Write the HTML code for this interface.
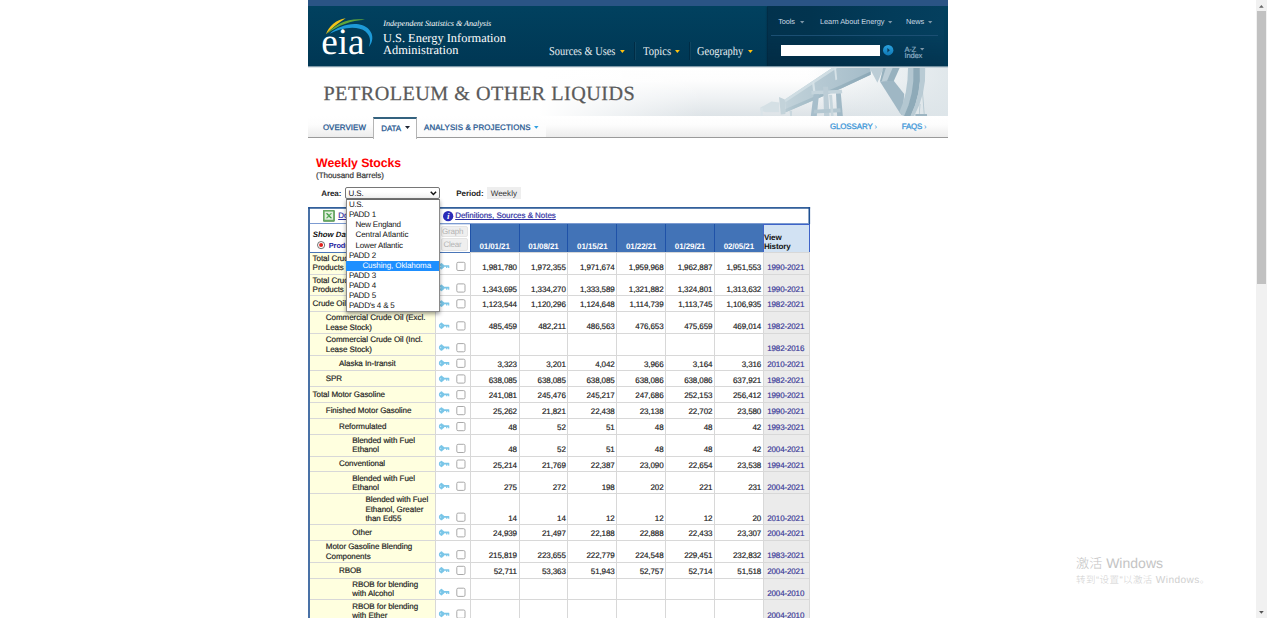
<!DOCTYPE html>
<html lang="en"><head><meta charset="utf-8"><title>Weekly Stocks - U.S. Energy Information Administration</title>
<style>
html,body{margin:0;padding:0;background:#fff;}
body{width:1267px;height:618px;overflow:hidden;position:relative;font-family:"Liberation Sans",sans-serif;}
.t{position:absolute;white-space:nowrap;margin:0;padding:0;text-rendering:geometricPrecision;}
.b{position:absolute;margin:0;padding:0;}
svg{position:absolute;overflow:visible}
</style></head><body>
<div class="b" style="left:308.00px;top:0.00px;width:640.00px;height:6.20px;background:#2a5485;"></div>
<div class="b" style="left:308.00px;top:6.20px;width:640.00px;height:60.10px;background:linear-gradient(#01415f,#003754);"></div>
<div class="b" style="left:767.00px;top:6.20px;width:176.50px;height:60.10px;background:linear-gradient(180deg,rgba(0,25,45,0) 45%,rgba(0,25,45,.28) 100%),linear-gradient(90deg,#02324d 0,#02344f 25%,#033c5a 70%,#043f5e 100%);"></div>
<div class="b" style="left:765.00px;top:6.60px;width:3.00px;height:59.70px;background:linear-gradient(90deg,rgba(0,30,50,0),rgba(0,30,50,.35));"></div>
<svg style="left:318px;top:14px" width="60" height="46" viewBox="0 0 60 46">
<path d="M7.9 20.3 C11 12 18 6 27.7 4.3 C21 8.5 13 15 7.9 20.3Z" fill="#f2c41a"/>
<path d="M9.1 19.8 C17 10 31 3.5 47 5.8 C33 6.5 20 11.5 9.1 19.8Z" fill="#5fa53c"/>
<path d="M11.7 19.8 C22 10 42 6 51 15.5 C56 21 55 28 50.8 33 C53 27 52.5 22 47.5 17.5 C40 11.5 24 13 11.7 19.8Z" fill="#1d9ad8"/>
</svg>
<div class="t " style="left:321.30px;top:18.70px;font:normal normal 37.30px/48.49px 'Liberation Serif',serif;color:#fff;letter-spacing:-0.091px;">eia</div>
<div class="t " style="left:383.30px;top:19.30px;font:italic normal 8.10px/10.53px 'Liberation Serif',serif;color:#fff;letter-spacing:-0.029px;">Independent Statistics &amp; Analysis</div>
<div class="t " style="left:383.00px;top:29.70px;font:normal normal 12.40px/16.12px 'Liberation Serif',serif;color:#fff;letter-spacing:-0.003px;">U.S. Energy Information</div>
<div class="t " style="left:383.00px;top:41.70px;font:normal normal 12.40px/16.12px 'Liberation Serif',serif;color:#fff;letter-spacing:0.030px;">Administration</div>
<div class="t " style="left:548.60px;top:43.90px;font:normal normal 12.00px/15.60px 'Liberation Serif',serif;color:#e8eef2;transform:scaleX(0.8662);transform-origin:0 0;">Sources &amp; Uses</div>
<div class="t " style="left:642.80px;top:43.90px;font:normal normal 12.00px/15.60px 'Liberation Serif',serif;color:#e8eef2;transform:scaleX(0.8830);transform-origin:0 0;">Topics</div>
<div class="t " style="left:696.60px;top:43.90px;font:normal normal 12.00px/15.60px 'Liberation Serif',serif;color:#e8eef2;transform:scaleX(0.8666);transform-origin:0 0;">Geography</div>
<svg style="left:619.80px;top:50.20px" width="4.80" height="2.90" viewBox="0 0 10 6"><path d="M0 0H10L5 6Z" fill="#ffc20e"/></svg>
<svg style="left:675.00px;top:50.20px" width="4.80" height="2.90" viewBox="0 0 10 6"><path d="M0 0H10L5 6Z" fill="#ffc20e"/></svg>
<svg style="left:747.70px;top:50.20px" width="4.80" height="2.90" viewBox="0 0 10 6"><path d="M0 0H10L5 6Z" fill="#ffc20e"/></svg>
<div class="b" style="left:634.30px;top:41.50px;width:1.00px;height:18.00px;background:#002c45;"></div>
<div class="b" style="left:635.30px;top:41.50px;width:1.00px;height:18.00px;background:rgba(255,255,255,.06);"></div>
<div class="b" style="left:689.30px;top:41.50px;width:1.00px;height:18.00px;background:#002c45;"></div>
<div class="b" style="left:690.30px;top:41.50px;width:1.00px;height:18.00px;background:rgba(255,255,255,.06);"></div>
<div class="t " style="left:778.20px;top:17.00px;font:normal normal 7.40px/9.62px 'Liberation Sans',sans-serif;color:#c8d8e3;letter-spacing:-0.095px;">Tools</div>
<div class="t " style="left:820.00px;top:17.00px;font:normal normal 7.40px/9.62px 'Liberation Sans',sans-serif;color:#c8d8e3;letter-spacing:-0.056px;">Learn About Energy</div>
<div class="t " style="left:906.00px;top:17.00px;font:normal normal 7.40px/9.62px 'Liberation Sans',sans-serif;color:#c8d8e3;letter-spacing:-0.076px;">News</div>
<svg style="left:800.20px;top:20.60px" width="4.40" height="2.60" viewBox="0 0 10 6"><path d="M0 0H10L5 6Z" fill="#7f97a8"/></svg>
<svg style="left:888.30px;top:20.60px" width="4.40" height="2.60" viewBox="0 0 10 6"><path d="M0 0H10L5 6Z" fill="#7f97a8"/></svg>
<svg style="left:927.50px;top:20.60px" width="4.40" height="2.60" viewBox="0 0 10 6"><path d="M0 0H10L5 6Z" fill="#7f97a8"/></svg>
<div class="b" style="left:771.40px;top:35.20px;width:167.00px;height:1.00px;background:#1b4f73;"></div>
<div class="b" style="left:781.30px;top:44.50px;width:99.00px;height:11.90px;background:#fff;"></div>
<svg style="left:882.8px;top:45.3px" width="10.4" height="10.4" viewBox="0 0 20 20"><defs><linearGradient id="sb" x1="0" y1="0" x2="0" y2="1"><stop offset="0" stop-color="#2ba3e0"/><stop offset="1" stop-color="#0f78b4"/></linearGradient></defs><circle cx="10" cy="10" r="10" fill="url(#sb)"/><path d="M8.4 5.6L13.2 10L8.4 14.4Z" fill="#0a3a58"/></svg>
<div class="t " style="left:904.40px;top:44.60px;font:normal normal 7.60px/9.88px 'Liberation Sans',sans-serif;color:#8badc4;letter-spacing:-0.214px;-webkit-text-stroke:0.18px;">A-Z</div>
<div class="t " style="left:904.60px;top:51.00px;font:normal normal 7.60px/9.88px 'Liberation Sans',sans-serif;color:#8badc4;letter-spacing:-0.198px;-webkit-text-stroke:0.18px;">Index</div>
<svg style="left:919.50px;top:47.60px" width="4.40" height="2.60" viewBox="0 0 10 6"><path d="M0 0H10L5 6Z" fill="#7f97a8"/></svg>
<div class="b" style="left:308px;top:66.3px;width:640px;height:49.9px;background:linear-gradient(90deg,#fff 0,#fff 36%,rgba(255,255,255,0) 62%),linear-gradient(90deg,rgba(221,229,233,0) 78%,rgba(221,229,233,.9) 100%),linear-gradient(180deg,#fff 0,#fdfdfd 30%,#eef1f3 65%,#dde3e7 100%);"></div>
<svg style="left:0;top:0" width="1267" height="130" viewBox="0 0 1267 130"><defs><clipPath id="bc"><rect x="308" y="67.4" width="640" height="48.8"/></clipPath><linearGradient id="bg1" gradientUnits="userSpaceOnUse" x1="760" y1="0" x2="875" y2="0"><stop offset="0" stop-color="#dce6ea"/><stop offset=".25" stop-color="#c0d1d9"/><stop offset="1" stop-color="#a3bbc8"/></linearGradient><linearGradient id="bg2" gradientUnits="userSpaceOnUse" x1="760" y1="0" x2="875" y2="0"><stop offset="0" stop-color="#d9e3e8"/><stop offset=".3" stop-color="#adc3cd"/><stop offset="1" stop-color="#8aa7b6"/></linearGradient></defs><g clip-path="url(#bc)"><path d="M760.3 107.6 L771.5 101.5 L779.2 102.5 L779.2 112.2 L765.4 112.2 L760.8 110.7Z" fill="#d5e0e5"/><path d="M760.3 108.1 L762.8 108.1 L762.8 116.8 L760.8 116.8Z" fill="#d9e3e8"/><path d="M779.0 97.0 L784.9 99.4 L785.4 114.1 L780.8 114.5Z" fill="#c3d3da"/><path d="M789.5 110.7 L792.1 110.7 L791.9 116.8 L790.2 116.8Z" fill="#c9d7de"/><path d="M784.9 99.4 L832.1 67.9 L870.6 67.9 L870.6 74.8 L842.3 88.1 L785.4 112.2Z" fill="url(#bg1)"/><path d="M785.4 109.1 L842.3 84.5 L870.6 71.4 L870.6 74.8 L842.3 88.1 L785.4 112.4Z" fill="url(#bg2)"/><path d="M784.9 99.4 L832.1 67.9 L837.2 67.9 L785.4 102.2Z" fill="#cfdde3"/><path d="M812.1 82.5 L814.1 81.2 L815.7 93.8 L813.6 94.8Z" fill="#d6e2e7"/><path d="M834.1 68.1 L836.0 68.1 L837.2 79.4 L835.4 80.2Z" fill="#d6e2e7"/><path d="M811.4 90.9 L841.8 89.7 L842.3 93.2 L811.6 94.6Z" fill="#c4d4dc"/><path d="M813.6 94.3 L819.0 94.0 L816.7 116.8 L810.7 116.8Z" fill="#a7becb"/><path d="M823.1 86.8 L828.0 86.8 L829.5 116.8 L824.1 116.8Z" fill="#bccdd6"/><path d="M836.0 93.6 L840.8 93.2 L842.9 116.8 L837.2 116.8Z" fill="#a1b9c6"/><path d="M814.1 109.7 L840.3 108.3 L840.7 112.2 L813.6 113.5Z" fill="#b3c7d1"/><path d="M829.0 94.8 L832.1 94.8 L833.6 116.8 L831.1 116.8Z" fill="#c6d5dc"/><path d="M869.5 68.1 L883.7 68.1 L877.4 82.8Z" fill="#bccdd6"/><path d="M883.1 68.1 L899.6 68.1 L893.7 81.2 L879.9 81.4Z" fill="#97b1be"/><path d="M879.9 81.4 L893.7 80.8 L904.2 94.1 L902.4 115.8 L899.4 112.2Z" fill="#9fb7c4"/><path d="M885.8 68.1 L892.6 68.1 L887.1 80.8 L881.7 81.2Z" fill="#bdced7"/><path d="M908.0 68.1 Q908.0 93.9 899.4 112.0 L904.3 116.5 Q915.2 93.9 914.8 68.1 Z" fill="#b3c7d1"/><path d="M913.4 68.1 Q914.8 93.9 903.9 116.5 L910.7 116.5 Q921.6 93.9 920.2 68.1 Z" fill="#8eaab8"/><path d="M919.7 68.1 Q921.6 93.9 910.2 116.5 L913.9 116.5 Q926.5 93.9 925.2 68.1 Z" fill="#b9cbd4"/><path d="M922.0 91.2 L922.9 91.2 L924.7 114.7 L923.8 114.7Z" fill="#b6c8d1"/><path d="M919.7 103.9 L920.5 103.9 L919.6 114.7 L918.8 114.7Z" fill="#b6c8d1"/><path d="M915.4 114.1 L927.0 114.1 L927.0 116.7 L915.4 116.7Z" fill="#9db5c2"/></g></svg>
<div class="b" style="left:308.00px;top:66.00px;width:640.00px;height:1.00px;background:rgba(0,52,82,.5);"></div>
<div class="b" style="left:308.00px;top:67.00px;width:640.00px;height:1.00px;background:rgba(0,52,82,.12);"></div>
<div class="t " style="left:323.40px;top:80.80px;font:normal normal 20.20px/26.26px 'Liberation Serif',serif;color:#5a5a5a;letter-spacing:0.473px;-webkit-text-stroke:0.25px;">PETROLEUM &amp; OTHER LIQUIDS</div>
<div class="b" style="left:308.00px;top:116.00px;width:640.00px;height:21.30px;background:linear-gradient(#fff 0,#fdfdfd 40%,#ececec 100%);"></div>
<div class="b" style="left:308.00px;top:137.00px;width:640.00px;height:1.00px;background:#9a9a9a;"></div>
<div class="b" style="left:417.00px;top:116.00px;width:129.00px;height:21.00px;background:linear-gradient(#fff,#fafafa);"></div>
<div class="b" style="left:373.40px;top:116.60px;width:43.60px;height:22.00px;background:#fff;border:1px solid #b5b5b5;border-top:2px solid #34627f;border-bottom:none;box-sizing:border-box;"></div>
<div class="t " style="left:322.90px;top:122.50px;font:normal normal 7.90px/10.27px 'Liberation Sans',sans-serif;color:#2a5a92;letter-spacing:0.083px;-webkit-text-stroke:0.28px;">OVERVIEW</div>
<div class="t " style="left:381.30px;top:123.60px;font:normal normal 7.90px/10.27px 'Liberation Sans',sans-serif;color:#2a5a92;letter-spacing:-0.049px;-webkit-text-stroke:0.28px;">DATA</div>
<svg style="left:404.90px;top:126.40px" width="5.00" height="3.00" viewBox="0 0 10 6"><path d="M0 0H10L5 6Z" fill="#1d2433"/></svg>
<div class="t " style="left:424.00px;top:122.50px;font:normal normal 7.90px/10.27px 'Liberation Sans',sans-serif;color:#2a5a92;letter-spacing:0.132px;-webkit-text-stroke:0.28px;">ANALYSIS &amp; PROJECTIONS</div>
<svg style="left:534.20px;top:125.60px" width="4.60" height="2.70" viewBox="0 0 10 6"><path d="M0 0H10L5 6Z" fill="#2f9fe0"/></svg>
<div class="t " style="left:829.90px;top:121.80px;font:normal normal 7.90px/10.27px 'Liberation Sans',sans-serif;color:#3a96d8;letter-spacing:-0.065px;-webkit-text-stroke:0.28px;">GLOSSARY</div>
<div class="t " style="left:874.50px;top:121.80px;font:normal normal 7.40px/9.62px 'Liberation Sans',sans-serif;color:#3a96d8;">›</div>
<div class="t " style="left:901.70px;top:121.80px;font:normal normal 7.90px/10.27px 'Liberation Sans',sans-serif;color:#3a96d8;letter-spacing:-0.193px;-webkit-text-stroke:0.28px;">FAQS</div>
<div class="t " style="left:924.00px;top:121.80px;font:normal normal 7.40px/9.62px 'Liberation Sans',sans-serif;color:#3a96d8;">›</div>
<div class="t " style="left:316.10px;top:155.40px;font:normal bold 12.35px/16.05px 'Liberation Sans',sans-serif;color:#f00;letter-spacing:-0.090px;">Weekly Stocks</div>
<div class="t " style="left:316.00px;top:170.60px;font:normal normal 8.00px/10.40px 'Liberation Sans',sans-serif;color:#333;letter-spacing:-0.032px;-webkit-text-stroke:0.18px;">(Thousand Barrels)</div>
<div class="t " style="left:321.20px;top:188.60px;font:normal bold 8.00px/10.40px 'Liberation Sans',sans-serif;color:#222;letter-spacing:-0.051px;">Area:</div>
<div class="b" style="left:345.40px;top:187.00px;width:94.40px;height:12.00px;background:linear-gradient(#fff 40%,#f1f1f1);border:1px solid #767676;border-radius:2px;box-sizing:border-box;"></div>
<div class="t " style="left:348.60px;top:189.00px;font:normal normal 8.00px/10.40px 'Liberation Sans',sans-serif;color:#111;letter-spacing:-0.140px;">U.S.</div>
<svg style="left:430.2px;top:191.3px" width="6.8" height="4.4" viewBox="0 0 14 9"><path d="M1.5 1.5L7 7L12.5 1.5" fill="none" stroke="#111" stroke-width="3.1"/></svg>
<div class="t " style="left:456.30px;top:188.60px;font:normal bold 8.00px/10.40px 'Liberation Sans',sans-serif;color:#222;letter-spacing:-0.051px;">Period:</div>
<div class="b" style="left:486.50px;top:186.60px;width:34.00px;height:12.00px;background:#eee;"></div>
<div class="t " style="left:490.70px;top:188.60px;font:normal normal 8.00px/10.40px 'Liberation Sans',sans-serif;color:#333;letter-spacing:0.036px;">Weekly</div>
<svg style="left:0;top:0" width="1267" height="618" viewBox="0 0 1267 618"><g fill="#1d4f91"><rect x="308.2" y="207.1" width="501.9" height="1.6"/><rect x="308.2" y="207.1" width="1.6" height="411"/><rect x="808.5" y="207.1" width="1.6" height="17"/></g><rect x="309.8" y="223.1" width="498.7" height="1.2" fill="#6e91cd"/></svg>
<svg style="left:323.2px;top:209.9px" width="11.8" height="11.8" viewBox="0 0 24 24"><rect x="0" y="0" width="24" height="24" rx="2" fill="#4d8f49"/><rect x="0" y="0" width="22.5" height="22.5" rx="2" fill="#67a962"/><rect x="3.4" y="3.2" width="17.2" height="16.6" fill="#e3efdf"/><path d="M5.5 6.4L9.4 6.4L18.8 17L14.9 17Z" fill="#3f9a43"/><path d="M18.6 6.4L15.2 6.4L5.6 17L9.2 17Z" fill="#5aae5a"/></svg>
<div class="t " style="left:338.20px;top:210.90px;font:normal normal 8.00px/10.40px 'Liberation Sans',sans-serif;color:#2f2fa2;letter-spacing:-0.069px;text-decoration:underline;-webkit-text-stroke:0.18px;">Download Series History</div>
<svg style="left:442.7px;top:210.8px" width="10.3" height="10.3" viewBox="0 0 20 20"><circle cx="10" cy="10" r="10" fill="#2b2bb8"/><text x="10.4" y="16.2" font-family="Liberation Serif,serif" font-style="italic" font-weight="bold" font-size="18" fill="#fff" text-anchor="middle">i</text></svg>
<div class="t " style="left:455.20px;top:210.90px;font:normal normal 8.00px/10.40px 'Liberation Sans',sans-serif;color:#2f2fa2;letter-spacing:-0.044px;text-decoration:underline;-webkit-text-stroke:0.18px;">Definitions, Sources &amp; Notes</div>
<div class="b" style="left:309.80px;top:224.00px;width:125.50px;height:28.30px;background:#fff;"></div>
<div class="t " style="left:312.80px;top:229.90px;font:italic bold 7.80px/10.14px 'Liberation Sans',sans-serif;color:#111;">Show Data By:</div>
<svg style="left:316.9px;top:241.0px" width="8.2" height="8.2" viewBox="0 0 16 16"><circle cx="8" cy="8" r="7" fill="#fff" stroke="#5a5a5a" stroke-width="1.7"/><circle cx="8" cy="8" r="3.9" fill="#e2201c"/></svg>
<div class="t " style="left:328.70px;top:241.00px;font:normal bold 7.40px/9.62px 'Liberation Sans',sans-serif;color:#2020a0;letter-spacing:-0.051px;">Product</div>
<svg style="left:362px;top:241.2px" width="7.8" height="7.8" viewBox="0 0 16 16"><circle cx="8" cy="8" r="7" fill="#fff" stroke="#888" stroke-width="1.6"/></svg>
<div class="t " style="left:373.00px;top:241.00px;font:normal bold 7.40px/9.62px 'Liberation Sans',sans-serif;color:#2020a0;">Area</div>
<div class="b" style="left:440.70px;top:225.60px;width:27.60px;height:11.80px;background:#efefef;border:1px solid #e4e4e4;border-radius:2px;box-sizing:border-box;"></div>
<div class="b" style="left:440.70px;top:238.40px;width:27.60px;height:12.20px;background:#efefef;border:1px solid #e4e4e4;border-radius:2px;box-sizing:border-box;"></div>
<div class="t " style="left:441.90px;top:226.70px;font:normal normal 8.00px/10.40px 'Liberation Sans',sans-serif;color:#b4b4b4;letter-spacing:-0.147px;">Graph</div>
<div class="t " style="left:443.40px;top:239.90px;font:normal normal 8.00px/10.40px 'Liberation Sans',sans-serif;color:#b4b4b4;letter-spacing:-0.203px;">Clear</div>
<div class="b" style="left:470.20px;top:223.60px;width:293.10px;height:28.70px;background:#4273b7;"></div>
<div class="b" style="left:469.70px;top:223.60px;width:1.10px;height:28.70px;background:#1f52a8;"></div>
<div class="b" style="left:518.55px;top:223.60px;width:1.10px;height:28.70px;background:#1f52a8;"></div>
<div class="b" style="left:567.40px;top:223.60px;width:1.10px;height:28.70px;background:#1f52a8;"></div>
<div class="b" style="left:616.25px;top:223.60px;width:1.10px;height:28.70px;background:#1f52a8;"></div>
<div class="b" style="left:665.10px;top:223.60px;width:1.10px;height:28.70px;background:#1f52a8;"></div>
<div class="b" style="left:713.95px;top:223.60px;width:1.10px;height:28.70px;background:#1f52a8;"></div>
<div class="b" style="left:762.80px;top:223.60px;width:1.10px;height:28.70px;background:#1f52a8;"></div>
<div class="t " style="left:479.43px;top:242.00px;font:normal bold 8.00px/10.40px 'Liberation Sans',sans-serif;color:#fff;letter-spacing:-0.093px;">01/01/21</div>
<div class="t " style="left:528.27px;top:242.00px;font:normal bold 8.00px/10.40px 'Liberation Sans',sans-serif;color:#fff;letter-spacing:-0.093px;">01/08/21</div>
<div class="t " style="left:577.12px;top:242.00px;font:normal bold 8.00px/10.40px 'Liberation Sans',sans-serif;color:#fff;letter-spacing:-0.093px;">01/15/21</div>
<div class="t " style="left:625.97px;top:242.00px;font:normal bold 8.00px/10.40px 'Liberation Sans',sans-serif;color:#fff;letter-spacing:-0.093px;">01/22/21</div>
<div class="t " style="left:674.83px;top:242.00px;font:normal bold 8.00px/10.40px 'Liberation Sans',sans-serif;color:#fff;letter-spacing:-0.093px;">01/29/21</div>
<div class="t " style="left:723.67px;top:242.00px;font:normal bold 8.00px/10.40px 'Liberation Sans',sans-serif;color:#fff;letter-spacing:-0.093px;">02/05/21</div>
<div class="b" style="left:763.30px;top:224.00px;width:46.70px;height:28.60px;background:#d2e2f3;border:1px solid #3f63c8;box-sizing:border-box;"></div>
<div class="t " style="left:763.90px;top:232.80px;font:normal bold 8.00px/10.40px 'Liberation Sans',sans-serif;color:#111;letter-spacing:-0.121px;">View</div>
<div class="t " style="left:763.90px;top:242.00px;font:normal bold 8.00px/10.40px 'Liberation Sans',sans-serif;color:#111;letter-spacing:-0.138px;">History</div>
<div class="b" style="left:309.80px;top:252.30px;width:125.60px;height:21.70px;background:#ffffdf;"></div>
<div class="b" style="left:763.30px;top:252.30px;width:46.70px;height:21.70px;background:#ebebeb;"></div>
<div class="t " style="left:312.60px;top:253.90px;font:normal normal 8.00px/10.40px 'Liberation Sans',sans-serif;color:#222;letter-spacing:-0.048px;-webkit-text-stroke:0.18px;">Total Crude Oil and Petroleum</div>
<div class="t " style="left:312.60px;top:263.30px;font:normal normal 8.00px/10.40px 'Liberation Sans',sans-serif;color:#222;letter-spacing:-0.047px;-webkit-text-stroke:0.18px;">Products (Incl. SPR)</div>
<div class="t " style="left:482.25px;top:262.90px;font:normal normal 8.00px/10.40px 'Liberation Sans',sans-serif;color:#222;letter-spacing:-0.099px;-webkit-text-stroke:0.18px;">1,981,780</div>
<div class="t " style="left:531.10px;top:262.90px;font:normal normal 8.00px/10.40px 'Liberation Sans',sans-serif;color:#222;letter-spacing:-0.099px;-webkit-text-stroke:0.18px;">1,972,355</div>
<div class="t " style="left:579.95px;top:262.90px;font:normal normal 8.00px/10.40px 'Liberation Sans',sans-serif;color:#222;letter-spacing:-0.099px;-webkit-text-stroke:0.18px;">1,971,674</div>
<div class="t " style="left:628.80px;top:262.90px;font:normal normal 8.00px/10.40px 'Liberation Sans',sans-serif;color:#222;letter-spacing:-0.099px;-webkit-text-stroke:0.18px;">1,959,968</div>
<div class="t " style="left:677.65px;top:262.90px;font:normal normal 8.00px/10.40px 'Liberation Sans',sans-serif;color:#222;letter-spacing:-0.099px;-webkit-text-stroke:0.18px;">1,962,887</div>
<div class="t " style="left:726.50px;top:262.90px;font:normal normal 8.00px/10.40px 'Liberation Sans',sans-serif;color:#222;letter-spacing:-0.099px;-webkit-text-stroke:0.18px;">1,951,553</div>
<div class="t " style="left:767.28px;top:262.90px;font:normal normal 8.00px/10.40px 'Liberation Sans',sans-serif;color:#3a3a98;letter-spacing:-0.149px;-webkit-text-stroke:0.18px;">1990-2021</div>
<div class="b" style="left:309.80px;top:274.00px;width:125.60px;height:21.60px;background:#ffffdf;"></div>
<div class="b" style="left:763.30px;top:274.00px;width:46.70px;height:21.60px;background:#ebebeb;"></div>
<div class="t " style="left:312.60px;top:275.55px;font:normal normal 8.00px/10.40px 'Liberation Sans',sans-serif;color:#222;letter-spacing:-0.048px;-webkit-text-stroke:0.18px;">Total Crude Oil and Petroleum</div>
<div class="t " style="left:312.60px;top:284.95px;font:normal normal 8.00px/10.40px 'Liberation Sans',sans-serif;color:#222;letter-spacing:-0.049px;-webkit-text-stroke:0.18px;">Products (Excl. SPR)</div>
<div class="t " style="left:482.25px;top:284.50px;font:normal normal 8.00px/10.40px 'Liberation Sans',sans-serif;color:#222;letter-spacing:-0.099px;-webkit-text-stroke:0.18px;">1,343,695</div>
<div class="t " style="left:531.10px;top:284.50px;font:normal normal 8.00px/10.40px 'Liberation Sans',sans-serif;color:#222;letter-spacing:-0.099px;-webkit-text-stroke:0.18px;">1,334,270</div>
<div class="t " style="left:579.95px;top:284.50px;font:normal normal 8.00px/10.40px 'Liberation Sans',sans-serif;color:#222;letter-spacing:-0.099px;-webkit-text-stroke:0.18px;">1,333,589</div>
<div class="t " style="left:628.80px;top:284.50px;font:normal normal 8.00px/10.40px 'Liberation Sans',sans-serif;color:#222;letter-spacing:-0.099px;-webkit-text-stroke:0.18px;">1,321,882</div>
<div class="t " style="left:677.65px;top:284.50px;font:normal normal 8.00px/10.40px 'Liberation Sans',sans-serif;color:#222;letter-spacing:-0.099px;-webkit-text-stroke:0.18px;">1,324,801</div>
<div class="t " style="left:726.50px;top:284.50px;font:normal normal 8.00px/10.40px 'Liberation Sans',sans-serif;color:#222;letter-spacing:-0.099px;-webkit-text-stroke:0.18px;">1,313,632</div>
<div class="t " style="left:767.28px;top:284.50px;font:normal normal 8.00px/10.40px 'Liberation Sans',sans-serif;color:#3a3a98;letter-spacing:-0.149px;-webkit-text-stroke:0.18px;">1990-2021</div>
<div class="b" style="left:309.80px;top:295.60px;width:125.60px;height:15.80px;background:#ffffdf;"></div>
<div class="b" style="left:763.30px;top:295.60px;width:46.70px;height:15.80px;background:#ebebeb;"></div>
<div class="t " style="left:312.60px;top:298.95px;font:normal normal 8.00px/10.40px 'Liberation Sans',sans-serif;color:#222;letter-spacing:-0.048px;-webkit-text-stroke:0.18px;">Crude Oil (Including SPR)</div>
<div class="t " style="left:482.25px;top:300.30px;font:normal normal 8.00px/10.40px 'Liberation Sans',sans-serif;color:#222;letter-spacing:-0.099px;-webkit-text-stroke:0.18px;">1,123,544</div>
<div class="t " style="left:531.10px;top:300.30px;font:normal normal 8.00px/10.40px 'Liberation Sans',sans-serif;color:#222;letter-spacing:-0.099px;-webkit-text-stroke:0.18px;">1,120,296</div>
<div class="t " style="left:579.95px;top:300.30px;font:normal normal 8.00px/10.40px 'Liberation Sans',sans-serif;color:#222;letter-spacing:-0.099px;-webkit-text-stroke:0.18px;">1,124,648</div>
<div class="t " style="left:629.38px;top:300.30px;font:normal normal 8.00px/10.40px 'Liberation Sans',sans-serif;color:#222;letter-spacing:-0.097px;-webkit-text-stroke:0.18px;">1,114,739</div>
<div class="t " style="left:678.23px;top:300.30px;font:normal normal 8.00px/10.40px 'Liberation Sans',sans-serif;color:#222;letter-spacing:-0.097px;-webkit-text-stroke:0.18px;">1,113,745</div>
<div class="t " style="left:726.50px;top:300.30px;font:normal normal 8.00px/10.40px 'Liberation Sans',sans-serif;color:#222;letter-spacing:-0.099px;-webkit-text-stroke:0.18px;">1,106,935</div>
<div class="t " style="left:767.28px;top:300.30px;font:normal normal 8.00px/10.40px 'Liberation Sans',sans-serif;color:#3a3a98;letter-spacing:-0.149px;-webkit-text-stroke:0.18px;">1982-2021</div>
<div class="b" style="left:309.80px;top:311.40px;width:125.60px;height:22.10px;background:#ffffdf;"></div>
<div class="b" style="left:763.30px;top:311.40px;width:46.70px;height:22.10px;background:#ebebeb;"></div>
<div class="t " style="left:325.80px;top:313.20px;font:normal normal 8.00px/10.40px 'Liberation Sans',sans-serif;color:#222;letter-spacing:-0.049px;-webkit-text-stroke:0.18px;">Commercial Crude Oil (Excl.</div>
<div class="t " style="left:325.80px;top:322.60px;font:normal normal 8.00px/10.40px 'Liberation Sans',sans-serif;color:#222;letter-spacing:-0.051px;-webkit-text-stroke:0.18px;">Lease Stock)</div>
<div class="t " style="left:488.75px;top:322.40px;font:normal normal 8.00px/10.40px 'Liberation Sans',sans-serif;color:#222;letter-spacing:-0.103px;-webkit-text-stroke:0.18px;">485,459</div>
<div class="t " style="left:538.18px;top:322.40px;font:normal normal 8.00px/10.40px 'Liberation Sans',sans-serif;color:#222;letter-spacing:-0.101px;-webkit-text-stroke:0.18px;">482,211</div>
<div class="t " style="left:586.45px;top:322.40px;font:normal normal 8.00px/10.40px 'Liberation Sans',sans-serif;color:#222;letter-spacing:-0.103px;-webkit-text-stroke:0.18px;">486,563</div>
<div class="t " style="left:635.30px;top:322.40px;font:normal normal 8.00px/10.40px 'Liberation Sans',sans-serif;color:#222;letter-spacing:-0.103px;-webkit-text-stroke:0.18px;">476,653</div>
<div class="t " style="left:684.15px;top:322.40px;font:normal normal 8.00px/10.40px 'Liberation Sans',sans-serif;color:#222;letter-spacing:-0.103px;-webkit-text-stroke:0.18px;">475,659</div>
<div class="t " style="left:733.00px;top:322.40px;font:normal normal 8.00px/10.40px 'Liberation Sans',sans-serif;color:#222;letter-spacing:-0.103px;-webkit-text-stroke:0.18px;">469,014</div>
<div class="t " style="left:767.28px;top:322.40px;font:normal normal 8.00px/10.40px 'Liberation Sans',sans-serif;color:#3a3a98;letter-spacing:-0.149px;-webkit-text-stroke:0.18px;">1982-2021</div>
<div class="b" style="left:309.80px;top:333.50px;width:125.60px;height:21.80px;background:#ffffdf;"></div>
<div class="b" style="left:763.30px;top:333.50px;width:46.70px;height:21.80px;background:#ebebeb;"></div>
<div class="t " style="left:325.80px;top:335.15px;font:normal normal 8.00px/10.40px 'Liberation Sans',sans-serif;color:#222;letter-spacing:-0.047px;-webkit-text-stroke:0.18px;">Commercial Crude Oil (Incl.</div>
<div class="t " style="left:325.80px;top:344.55px;font:normal normal 8.00px/10.40px 'Liberation Sans',sans-serif;color:#222;letter-spacing:-0.051px;-webkit-text-stroke:0.18px;">Lease Stock)</div>
<div class="t " style="left:767.28px;top:344.20px;font:normal normal 8.00px/10.40px 'Liberation Sans',sans-serif;color:#3a3a98;letter-spacing:-0.149px;-webkit-text-stroke:0.18px;">1982-2016</div>
<div class="b" style="left:309.80px;top:355.30px;width:125.60px;height:15.60px;background:#ffffdf;"></div>
<div class="b" style="left:763.30px;top:355.30px;width:46.70px;height:15.60px;background:#ebebeb;"></div>
<div class="t " style="left:339.00px;top:358.55px;font:normal normal 8.00px/10.40px 'Liberation Sans',sans-serif;color:#222;letter-spacing:-0.044px;-webkit-text-stroke:0.18px;">Alaska In-transit</div>
<div class="t " style="left:497.43px;top:359.80px;font:normal normal 8.00px/10.40px 'Liberation Sans',sans-serif;color:#222;letter-spacing:-0.100px;-webkit-text-stroke:0.18px;">3,323</div>
<div class="t " style="left:546.28px;top:359.80px;font:normal normal 8.00px/10.40px 'Liberation Sans',sans-serif;color:#222;letter-spacing:-0.100px;-webkit-text-stroke:0.18px;">3,201</div>
<div class="t " style="left:595.13px;top:359.80px;font:normal normal 8.00px/10.40px 'Liberation Sans',sans-serif;color:#222;letter-spacing:-0.100px;-webkit-text-stroke:0.18px;">4,042</div>
<div class="t " style="left:643.98px;top:359.80px;font:normal normal 8.00px/10.40px 'Liberation Sans',sans-serif;color:#222;letter-spacing:-0.100px;-webkit-text-stroke:0.18px;">3,966</div>
<div class="t " style="left:692.83px;top:359.80px;font:normal normal 8.00px/10.40px 'Liberation Sans',sans-serif;color:#222;letter-spacing:-0.100px;-webkit-text-stroke:0.18px;">3,164</div>
<div class="t " style="left:741.68px;top:359.80px;font:normal normal 8.00px/10.40px 'Liberation Sans',sans-serif;color:#222;letter-spacing:-0.100px;-webkit-text-stroke:0.18px;">3,316</div>
<div class="t " style="left:767.28px;top:359.80px;font:normal normal 8.00px/10.40px 'Liberation Sans',sans-serif;color:#3a3a98;letter-spacing:-0.149px;-webkit-text-stroke:0.18px;">2010-2021</div>
<div class="b" style="left:309.80px;top:370.90px;width:125.60px;height:15.70px;background:#ffffdf;"></div>
<div class="b" style="left:763.30px;top:370.90px;width:46.70px;height:15.70px;background:#ebebeb;"></div>
<div class="t " style="left:325.80px;top:374.20px;font:normal normal 8.00px/10.40px 'Liberation Sans',sans-serif;color:#222;letter-spacing:-0.071px;-webkit-text-stroke:0.18px;">SPR</div>
<div class="t " style="left:488.75px;top:375.50px;font:normal normal 8.00px/10.40px 'Liberation Sans',sans-serif;color:#222;letter-spacing:-0.103px;-webkit-text-stroke:0.18px;">638,085</div>
<div class="t " style="left:537.60px;top:375.50px;font:normal normal 8.00px/10.40px 'Liberation Sans',sans-serif;color:#222;letter-spacing:-0.103px;-webkit-text-stroke:0.18px;">638,085</div>
<div class="t " style="left:586.45px;top:375.50px;font:normal normal 8.00px/10.40px 'Liberation Sans',sans-serif;color:#222;letter-spacing:-0.103px;-webkit-text-stroke:0.18px;">638,085</div>
<div class="t " style="left:635.30px;top:375.50px;font:normal normal 8.00px/10.40px 'Liberation Sans',sans-serif;color:#222;letter-spacing:-0.103px;-webkit-text-stroke:0.18px;">638,086</div>
<div class="t " style="left:684.15px;top:375.50px;font:normal normal 8.00px/10.40px 'Liberation Sans',sans-serif;color:#222;letter-spacing:-0.103px;-webkit-text-stroke:0.18px;">638,086</div>
<div class="t " style="left:733.00px;top:375.50px;font:normal normal 8.00px/10.40px 'Liberation Sans',sans-serif;color:#222;letter-spacing:-0.103px;-webkit-text-stroke:0.18px;">637,921</div>
<div class="t " style="left:767.28px;top:375.50px;font:normal normal 8.00px/10.40px 'Liberation Sans',sans-serif;color:#3a3a98;letter-spacing:-0.149px;-webkit-text-stroke:0.18px;">1982-2021</div>
<div class="b" style="left:309.80px;top:386.60px;width:125.60px;height:15.70px;background:#ffffdf;"></div>
<div class="b" style="left:763.30px;top:386.60px;width:46.70px;height:15.70px;background:#ebebeb;"></div>
<div class="t " style="left:312.60px;top:389.90px;font:normal normal 8.00px/10.40px 'Liberation Sans',sans-serif;color:#222;letter-spacing:-0.048px;-webkit-text-stroke:0.18px;">Total Motor Gasoline</div>
<div class="t " style="left:488.75px;top:391.20px;font:normal normal 8.00px/10.40px 'Liberation Sans',sans-serif;color:#222;letter-spacing:-0.103px;-webkit-text-stroke:0.18px;">241,081</div>
<div class="t " style="left:537.60px;top:391.20px;font:normal normal 8.00px/10.40px 'Liberation Sans',sans-serif;color:#222;letter-spacing:-0.103px;-webkit-text-stroke:0.18px;">245,476</div>
<div class="t " style="left:586.45px;top:391.20px;font:normal normal 8.00px/10.40px 'Liberation Sans',sans-serif;color:#222;letter-spacing:-0.103px;-webkit-text-stroke:0.18px;">245,217</div>
<div class="t " style="left:635.30px;top:391.20px;font:normal normal 8.00px/10.40px 'Liberation Sans',sans-serif;color:#222;letter-spacing:-0.103px;-webkit-text-stroke:0.18px;">247,686</div>
<div class="t " style="left:684.15px;top:391.20px;font:normal normal 8.00px/10.40px 'Liberation Sans',sans-serif;color:#222;letter-spacing:-0.103px;-webkit-text-stroke:0.18px;">252,153</div>
<div class="t " style="left:733.00px;top:391.20px;font:normal normal 8.00px/10.40px 'Liberation Sans',sans-serif;color:#222;letter-spacing:-0.103px;-webkit-text-stroke:0.18px;">256,412</div>
<div class="t " style="left:767.28px;top:391.20px;font:normal normal 8.00px/10.40px 'Liberation Sans',sans-serif;color:#3a3a98;letter-spacing:-0.149px;-webkit-text-stroke:0.18px;">1990-2021</div>
<div class="b" style="left:309.80px;top:402.30px;width:125.60px;height:15.90px;background:#ffffdf;"></div>
<div class="b" style="left:763.30px;top:402.30px;width:46.70px;height:15.90px;background:#ebebeb;"></div>
<div class="t " style="left:325.80px;top:405.70px;font:normal normal 8.00px/10.40px 'Liberation Sans',sans-serif;color:#222;letter-spacing:-0.049px;-webkit-text-stroke:0.18px;">Finished Motor Gasoline</div>
<div class="t " style="left:493.09px;top:407.10px;font:normal normal 8.00px/10.40px 'Liberation Sans',sans-serif;color:#222;letter-spacing:-0.102px;-webkit-text-stroke:0.18px;">25,262</div>
<div class="t " style="left:541.94px;top:407.10px;font:normal normal 8.00px/10.40px 'Liberation Sans',sans-serif;color:#222;letter-spacing:-0.102px;-webkit-text-stroke:0.18px;">21,821</div>
<div class="t " style="left:590.79px;top:407.10px;font:normal normal 8.00px/10.40px 'Liberation Sans',sans-serif;color:#222;letter-spacing:-0.102px;-webkit-text-stroke:0.18px;">22,438</div>
<div class="t " style="left:639.64px;top:407.10px;font:normal normal 8.00px/10.40px 'Liberation Sans',sans-serif;color:#222;letter-spacing:-0.102px;-webkit-text-stroke:0.18px;">23,138</div>
<div class="t " style="left:688.49px;top:407.10px;font:normal normal 8.00px/10.40px 'Liberation Sans',sans-serif;color:#222;letter-spacing:-0.102px;-webkit-text-stroke:0.18px;">22,702</div>
<div class="t " style="left:737.34px;top:407.10px;font:normal normal 8.00px/10.40px 'Liberation Sans',sans-serif;color:#222;letter-spacing:-0.102px;-webkit-text-stroke:0.18px;">23,580</div>
<div class="t " style="left:767.28px;top:407.10px;font:normal normal 8.00px/10.40px 'Liberation Sans',sans-serif;color:#3a3a98;letter-spacing:-0.149px;-webkit-text-stroke:0.18px;">1990-2021</div>
<div class="b" style="left:309.80px;top:418.20px;width:125.60px;height:16.00px;background:#ffffdf;"></div>
<div class="b" style="left:763.30px;top:418.20px;width:46.70px;height:16.00px;background:#ebebeb;"></div>
<div class="t " style="left:339.00px;top:421.65px;font:normal normal 8.00px/10.40px 'Liberation Sans',sans-serif;color:#222;letter-spacing:-0.052px;-webkit-text-stroke:0.18px;">Reformulated</div>
<div class="t " style="left:508.27px;top:423.10px;font:normal normal 8.00px/10.40px 'Liberation Sans',sans-serif;color:#222;letter-spacing:-0.111px;-webkit-text-stroke:0.18px;">48</div>
<div class="t " style="left:557.12px;top:423.10px;font:normal normal 8.00px/10.40px 'Liberation Sans',sans-serif;color:#222;letter-spacing:-0.111px;-webkit-text-stroke:0.18px;">52</div>
<div class="t " style="left:605.97px;top:423.10px;font:normal normal 8.00px/10.40px 'Liberation Sans',sans-serif;color:#222;letter-spacing:-0.111px;-webkit-text-stroke:0.18px;">51</div>
<div class="t " style="left:654.82px;top:423.10px;font:normal normal 8.00px/10.40px 'Liberation Sans',sans-serif;color:#222;letter-spacing:-0.111px;-webkit-text-stroke:0.18px;">48</div>
<div class="t " style="left:703.67px;top:423.10px;font:normal normal 8.00px/10.40px 'Liberation Sans',sans-serif;color:#222;letter-spacing:-0.111px;-webkit-text-stroke:0.18px;">48</div>
<div class="t " style="left:752.52px;top:423.10px;font:normal normal 8.00px/10.40px 'Liberation Sans',sans-serif;color:#222;letter-spacing:-0.111px;-webkit-text-stroke:0.18px;">42</div>
<div class="t " style="left:767.28px;top:423.10px;font:normal normal 8.00px/10.40px 'Liberation Sans',sans-serif;color:#3a3a98;letter-spacing:-0.149px;-webkit-text-stroke:0.18px;">1993-2021</div>
<div class="b" style="left:309.80px;top:434.20px;width:125.60px;height:21.80px;background:#ffffdf;"></div>
<div class="b" style="left:763.30px;top:434.20px;width:46.70px;height:21.80px;background:#ebebeb;"></div>
<div class="t " style="left:352.20px;top:435.85px;font:normal normal 8.00px/10.40px 'Liberation Sans',sans-serif;color:#222;letter-spacing:-0.049px;-webkit-text-stroke:0.18px;">Blended with Fuel</div>
<div class="t " style="left:352.20px;top:445.25px;font:normal normal 8.00px/10.40px 'Liberation Sans',sans-serif;color:#222;letter-spacing:-0.050px;-webkit-text-stroke:0.18px;">Ethanol</div>
<div class="t " style="left:508.27px;top:444.90px;font:normal normal 8.00px/10.40px 'Liberation Sans',sans-serif;color:#222;letter-spacing:-0.111px;-webkit-text-stroke:0.18px;">48</div>
<div class="t " style="left:557.12px;top:444.90px;font:normal normal 8.00px/10.40px 'Liberation Sans',sans-serif;color:#222;letter-spacing:-0.111px;-webkit-text-stroke:0.18px;">52</div>
<div class="t " style="left:605.97px;top:444.90px;font:normal normal 8.00px/10.40px 'Liberation Sans',sans-serif;color:#222;letter-spacing:-0.111px;-webkit-text-stroke:0.18px;">51</div>
<div class="t " style="left:654.82px;top:444.90px;font:normal normal 8.00px/10.40px 'Liberation Sans',sans-serif;color:#222;letter-spacing:-0.111px;-webkit-text-stroke:0.18px;">48</div>
<div class="t " style="left:703.67px;top:444.90px;font:normal normal 8.00px/10.40px 'Liberation Sans',sans-serif;color:#222;letter-spacing:-0.111px;-webkit-text-stroke:0.18px;">48</div>
<div class="t " style="left:752.52px;top:444.90px;font:normal normal 8.00px/10.40px 'Liberation Sans',sans-serif;color:#222;letter-spacing:-0.111px;-webkit-text-stroke:0.18px;">42</div>
<div class="t " style="left:767.28px;top:444.90px;font:normal normal 8.00px/10.40px 'Liberation Sans',sans-serif;color:#3a3a98;letter-spacing:-0.149px;-webkit-text-stroke:0.18px;">2004-2021</div>
<div class="b" style="left:309.80px;top:456.00px;width:125.60px;height:15.70px;background:#ffffdf;"></div>
<div class="b" style="left:763.30px;top:456.00px;width:46.70px;height:15.70px;background:#ebebeb;"></div>
<div class="t " style="left:339.00px;top:459.30px;font:normal normal 8.00px/10.40px 'Liberation Sans',sans-serif;color:#222;letter-spacing:-0.051px;-webkit-text-stroke:0.18px;">Conventional</div>
<div class="t " style="left:493.09px;top:460.60px;font:normal normal 8.00px/10.40px 'Liberation Sans',sans-serif;color:#222;letter-spacing:-0.102px;-webkit-text-stroke:0.18px;">25,214</div>
<div class="t " style="left:541.94px;top:460.60px;font:normal normal 8.00px/10.40px 'Liberation Sans',sans-serif;color:#222;letter-spacing:-0.102px;-webkit-text-stroke:0.18px;">21,769</div>
<div class="t " style="left:590.79px;top:460.60px;font:normal normal 8.00px/10.40px 'Liberation Sans',sans-serif;color:#222;letter-spacing:-0.102px;-webkit-text-stroke:0.18px;">22,387</div>
<div class="t " style="left:639.64px;top:460.60px;font:normal normal 8.00px/10.40px 'Liberation Sans',sans-serif;color:#222;letter-spacing:-0.102px;-webkit-text-stroke:0.18px;">23,090</div>
<div class="t " style="left:688.49px;top:460.60px;font:normal normal 8.00px/10.40px 'Liberation Sans',sans-serif;color:#222;letter-spacing:-0.102px;-webkit-text-stroke:0.18px;">22,654</div>
<div class="t " style="left:737.34px;top:460.60px;font:normal normal 8.00px/10.40px 'Liberation Sans',sans-serif;color:#222;letter-spacing:-0.102px;-webkit-text-stroke:0.18px;">23,538</div>
<div class="t " style="left:767.28px;top:460.60px;font:normal normal 8.00px/10.40px 'Liberation Sans',sans-serif;color:#3a3a98;letter-spacing:-0.149px;-webkit-text-stroke:0.18px;">1994-2021</div>
<div class="b" style="left:309.80px;top:471.70px;width:125.60px;height:22.20px;background:#ffffdf;"></div>
<div class="b" style="left:763.30px;top:471.70px;width:46.70px;height:22.20px;background:#ebebeb;"></div>
<div class="t " style="left:352.20px;top:473.55px;font:normal normal 8.00px/10.40px 'Liberation Sans',sans-serif;color:#222;letter-spacing:-0.049px;-webkit-text-stroke:0.18px;">Blended with Fuel</div>
<div class="t " style="left:352.20px;top:482.95px;font:normal normal 8.00px/10.40px 'Liberation Sans',sans-serif;color:#222;letter-spacing:-0.050px;-webkit-text-stroke:0.18px;">Ethanol</div>
<div class="t " style="left:503.94px;top:482.80px;font:normal normal 8.00px/10.40px 'Liberation Sans',sans-serif;color:#222;letter-spacing:-0.111px;-webkit-text-stroke:0.18px;">275</div>
<div class="t " style="left:552.79px;top:482.80px;font:normal normal 8.00px/10.40px 'Liberation Sans',sans-serif;color:#222;letter-spacing:-0.111px;-webkit-text-stroke:0.18px;">272</div>
<div class="t " style="left:601.64px;top:482.80px;font:normal normal 8.00px/10.40px 'Liberation Sans',sans-serif;color:#222;letter-spacing:-0.111px;-webkit-text-stroke:0.18px;">198</div>
<div class="t " style="left:650.49px;top:482.80px;font:normal normal 8.00px/10.40px 'Liberation Sans',sans-serif;color:#222;letter-spacing:-0.111px;-webkit-text-stroke:0.18px;">202</div>
<div class="t " style="left:699.34px;top:482.80px;font:normal normal 8.00px/10.40px 'Liberation Sans',sans-serif;color:#222;letter-spacing:-0.111px;-webkit-text-stroke:0.18px;">221</div>
<div class="t " style="left:748.19px;top:482.80px;font:normal normal 8.00px/10.40px 'Liberation Sans',sans-serif;color:#222;letter-spacing:-0.111px;-webkit-text-stroke:0.18px;">231</div>
<div class="t " style="left:767.28px;top:482.80px;font:normal normal 8.00px/10.40px 'Liberation Sans',sans-serif;color:#3a3a98;letter-spacing:-0.149px;-webkit-text-stroke:0.18px;">2004-2021</div>
<div class="b" style="left:309.80px;top:493.90px;width:125.60px;height:30.90px;background:#ffffdf;"></div>
<div class="b" style="left:763.30px;top:493.90px;width:46.70px;height:30.90px;background:#ebebeb;"></div>
<div class="t " style="left:365.40px;top:495.40px;font:normal normal 8.00px/10.40px 'Liberation Sans',sans-serif;color:#222;letter-spacing:-0.049px;-webkit-text-stroke:0.18px;">Blended with Fuel</div>
<div class="t " style="left:365.40px;top:504.80px;font:normal normal 8.00px/10.40px 'Liberation Sans',sans-serif;color:#222;letter-spacing:-0.048px;-webkit-text-stroke:0.18px;">Ethanol, Greater</div>
<div class="t " style="left:365.40px;top:514.20px;font:normal normal 8.00px/10.40px 'Liberation Sans',sans-serif;color:#222;letter-spacing:-0.053px;-webkit-text-stroke:0.18px;">than Ed55</div>
<div class="t " style="left:508.27px;top:513.70px;font:normal normal 8.00px/10.40px 'Liberation Sans',sans-serif;color:#222;letter-spacing:-0.111px;-webkit-text-stroke:0.18px;">14</div>
<div class="t " style="left:557.12px;top:513.70px;font:normal normal 8.00px/10.40px 'Liberation Sans',sans-serif;color:#222;letter-spacing:-0.111px;-webkit-text-stroke:0.18px;">14</div>
<div class="t " style="left:605.97px;top:513.70px;font:normal normal 8.00px/10.40px 'Liberation Sans',sans-serif;color:#222;letter-spacing:-0.111px;-webkit-text-stroke:0.18px;">12</div>
<div class="t " style="left:654.82px;top:513.70px;font:normal normal 8.00px/10.40px 'Liberation Sans',sans-serif;color:#222;letter-spacing:-0.111px;-webkit-text-stroke:0.18px;">12</div>
<div class="t " style="left:703.67px;top:513.70px;font:normal normal 8.00px/10.40px 'Liberation Sans',sans-serif;color:#222;letter-spacing:-0.111px;-webkit-text-stroke:0.18px;">12</div>
<div class="t " style="left:752.52px;top:513.70px;font:normal normal 8.00px/10.40px 'Liberation Sans',sans-serif;color:#222;letter-spacing:-0.111px;-webkit-text-stroke:0.18px;">20</div>
<div class="t " style="left:767.28px;top:513.70px;font:normal normal 8.00px/10.40px 'Liberation Sans',sans-serif;color:#3a3a98;letter-spacing:-0.149px;-webkit-text-stroke:0.18px;">2010-2021</div>
<div class="b" style="left:309.80px;top:524.80px;width:125.60px;height:15.60px;background:#ffffdf;"></div>
<div class="b" style="left:763.30px;top:524.80px;width:46.70px;height:15.60px;background:#ebebeb;"></div>
<div class="t " style="left:352.20px;top:528.05px;font:normal normal 8.00px/10.40px 'Liberation Sans',sans-serif;color:#222;letter-spacing:-0.052px;-webkit-text-stroke:0.18px;">Other</div>
<div class="t " style="left:493.09px;top:529.30px;font:normal normal 8.00px/10.40px 'Liberation Sans',sans-serif;color:#222;letter-spacing:-0.102px;-webkit-text-stroke:0.18px;">24,939</div>
<div class="t " style="left:541.94px;top:529.30px;font:normal normal 8.00px/10.40px 'Liberation Sans',sans-serif;color:#222;letter-spacing:-0.102px;-webkit-text-stroke:0.18px;">21,497</div>
<div class="t " style="left:590.79px;top:529.30px;font:normal normal 8.00px/10.40px 'Liberation Sans',sans-serif;color:#222;letter-spacing:-0.102px;-webkit-text-stroke:0.18px;">22,188</div>
<div class="t " style="left:639.64px;top:529.30px;font:normal normal 8.00px/10.40px 'Liberation Sans',sans-serif;color:#222;letter-spacing:-0.102px;-webkit-text-stroke:0.18px;">22,888</div>
<div class="t " style="left:688.49px;top:529.30px;font:normal normal 8.00px/10.40px 'Liberation Sans',sans-serif;color:#222;letter-spacing:-0.102px;-webkit-text-stroke:0.18px;">22,433</div>
<div class="t " style="left:737.34px;top:529.30px;font:normal normal 8.00px/10.40px 'Liberation Sans',sans-serif;color:#222;letter-spacing:-0.102px;-webkit-text-stroke:0.18px;">23,307</div>
<div class="t " style="left:767.28px;top:529.30px;font:normal normal 8.00px/10.40px 'Liberation Sans',sans-serif;color:#3a3a98;letter-spacing:-0.149px;-webkit-text-stroke:0.18px;">2004-2021</div>
<div class="b" style="left:309.80px;top:540.40px;width:125.60px;height:21.90px;background:#ffffdf;"></div>
<div class="b" style="left:763.30px;top:540.40px;width:46.70px;height:21.90px;background:#ebebeb;"></div>
<div class="t " style="left:325.80px;top:542.10px;font:normal normal 8.00px/10.40px 'Liberation Sans',sans-serif;color:#222;letter-spacing:-0.050px;-webkit-text-stroke:0.18px;">Motor Gasoline Blending</div>
<div class="t " style="left:325.80px;top:551.50px;font:normal normal 8.00px/10.40px 'Liberation Sans',sans-serif;color:#222;letter-spacing:-0.059px;-webkit-text-stroke:0.18px;">Components</div>
<div class="t " style="left:488.75px;top:551.20px;font:normal normal 8.00px/10.40px 'Liberation Sans',sans-serif;color:#222;letter-spacing:-0.103px;-webkit-text-stroke:0.18px;">215,819</div>
<div class="t " style="left:537.60px;top:551.20px;font:normal normal 8.00px/10.40px 'Liberation Sans',sans-serif;color:#222;letter-spacing:-0.103px;-webkit-text-stroke:0.18px;">223,655</div>
<div class="t " style="left:586.45px;top:551.20px;font:normal normal 8.00px/10.40px 'Liberation Sans',sans-serif;color:#222;letter-spacing:-0.103px;-webkit-text-stroke:0.18px;">222,779</div>
<div class="t " style="left:635.30px;top:551.20px;font:normal normal 8.00px/10.40px 'Liberation Sans',sans-serif;color:#222;letter-spacing:-0.103px;-webkit-text-stroke:0.18px;">224,548</div>
<div class="t " style="left:684.15px;top:551.20px;font:normal normal 8.00px/10.40px 'Liberation Sans',sans-serif;color:#222;letter-spacing:-0.103px;-webkit-text-stroke:0.18px;">229,451</div>
<div class="t " style="left:733.00px;top:551.20px;font:normal normal 8.00px/10.40px 'Liberation Sans',sans-serif;color:#222;letter-spacing:-0.103px;-webkit-text-stroke:0.18px;">232,832</div>
<div class="t " style="left:767.28px;top:551.20px;font:normal normal 8.00px/10.40px 'Liberation Sans',sans-serif;color:#3a3a98;letter-spacing:-0.149px;-webkit-text-stroke:0.18px;">1983-2021</div>
<div class="b" style="left:309.80px;top:562.30px;width:125.60px;height:15.70px;background:#ffffdf;"></div>
<div class="b" style="left:763.30px;top:562.30px;width:46.70px;height:15.70px;background:#ebebeb;"></div>
<div class="t " style="left:339.00px;top:565.60px;font:normal normal 8.00px/10.40px 'Liberation Sans',sans-serif;color:#222;letter-spacing:-0.074px;-webkit-text-stroke:0.18px;">RBOB</div>
<div class="t " style="left:493.67px;top:566.90px;font:normal normal 8.00px/10.40px 'Liberation Sans',sans-serif;color:#222;letter-spacing:-0.099px;-webkit-text-stroke:0.18px;">52,711</div>
<div class="t " style="left:541.94px;top:566.90px;font:normal normal 8.00px/10.40px 'Liberation Sans',sans-serif;color:#222;letter-spacing:-0.102px;-webkit-text-stroke:0.18px;">53,363</div>
<div class="t " style="left:590.79px;top:566.90px;font:normal normal 8.00px/10.40px 'Liberation Sans',sans-serif;color:#222;letter-spacing:-0.102px;-webkit-text-stroke:0.18px;">51,943</div>
<div class="t " style="left:639.64px;top:566.90px;font:normal normal 8.00px/10.40px 'Liberation Sans',sans-serif;color:#222;letter-spacing:-0.102px;-webkit-text-stroke:0.18px;">52,757</div>
<div class="t " style="left:688.49px;top:566.90px;font:normal normal 8.00px/10.40px 'Liberation Sans',sans-serif;color:#222;letter-spacing:-0.102px;-webkit-text-stroke:0.18px;">52,714</div>
<div class="t " style="left:737.34px;top:566.90px;font:normal normal 8.00px/10.40px 'Liberation Sans',sans-serif;color:#222;letter-spacing:-0.102px;-webkit-text-stroke:0.18px;">51,518</div>
<div class="t " style="left:767.28px;top:566.90px;font:normal normal 8.00px/10.40px 'Liberation Sans',sans-serif;color:#3a3a98;letter-spacing:-0.149px;-webkit-text-stroke:0.18px;">2004-2021</div>
<div class="b" style="left:309.80px;top:578.00px;width:125.60px;height:21.90px;background:#ffffdf;"></div>
<div class="b" style="left:763.30px;top:578.00px;width:46.70px;height:21.90px;background:#ebebeb;"></div>
<div class="t " style="left:352.20px;top:579.70px;font:normal normal 8.00px/10.40px 'Liberation Sans',sans-serif;color:#222;letter-spacing:-0.051px;-webkit-text-stroke:0.18px;">RBOB for blending</div>
<div class="t " style="left:352.20px;top:589.10px;font:normal normal 8.00px/10.40px 'Liberation Sans',sans-serif;color:#222;letter-spacing:-0.046px;-webkit-text-stroke:0.18px;">with Alcohol</div>
<div class="t " style="left:767.28px;top:588.80px;font:normal normal 8.00px/10.40px 'Liberation Sans',sans-serif;color:#3a3a98;letter-spacing:-0.149px;-webkit-text-stroke:0.18px;">2004-2010</div>
<div class="b" style="left:309.80px;top:599.90px;width:125.60px;height:21.80px;background:#ffffdf;"></div>
<div class="b" style="left:763.30px;top:599.90px;width:46.70px;height:21.80px;background:#ebebeb;"></div>
<div class="t " style="left:352.20px;top:601.55px;font:normal normal 8.00px/10.40px 'Liberation Sans',sans-serif;color:#222;letter-spacing:-0.051px;-webkit-text-stroke:0.18px;">RBOB for blending</div>
<div class="t " style="left:352.20px;top:610.95px;font:normal normal 8.00px/10.40px 'Liberation Sans',sans-serif;color:#222;letter-spacing:-0.046px;-webkit-text-stroke:0.18px;">with Ether</div>
<div class="t " style="left:767.28px;top:610.60px;font:normal normal 8.00px/10.40px 'Liberation Sans',sans-serif;color:#3a3a98;letter-spacing:-0.149px;-webkit-text-stroke:0.18px;">2004-2010</div>
<svg style="left:0;top:0" width="1267" height="618" viewBox="0 0 1267 618"><g transform="translate(438.9 262.95)"><path d="M2.55 0 C3.3 0.1 3.6 0.9 4.1 1.2 C4.7 1.5 5.1 1.7 5.3 2.2 H10 Q10.4 2.2 10.4 2.7 V5.1 H9.2 V3.9 H8.5 V5.1 H7.2 V3.9 H5.4 L5.3 4.4 C5.1 4.9 4.7 5.1 4.1 5.4 C3.6 5.7 3.3 6.5 2.55 6.6 C1.8 6.5 1.5 5.7 1 5.4 C0.3 5 0 4.2 0 3.3 C0 2.4 0.3 1.6 1 1.2 C1.5 0.9 1.8 0.1 2.55 0Z" fill="#7ac6e8"/><circle cx="1.75" cy="3.3" r="0.6" fill="#d4eef9"/></g><rect x="456.8" y="262.30" width="8.2" height="8.2" rx="1.3" fill="#fff" stroke="#a9a9a9" stroke-width="1"/><g transform="translate(438.9 284.55)"><path d="M2.55 0 C3.3 0.1 3.6 0.9 4.1 1.2 C4.7 1.5 5.1 1.7 5.3 2.2 H10 Q10.4 2.2 10.4 2.7 V5.1 H9.2 V3.9 H8.5 V5.1 H7.2 V3.9 H5.4 L5.3 4.4 C5.1 4.9 4.7 5.1 4.1 5.4 C3.6 5.7 3.3 6.5 2.55 6.6 C1.8 6.5 1.5 5.7 1 5.4 C0.3 5 0 4.2 0 3.3 C0 2.4 0.3 1.6 1 1.2 C1.5 0.9 1.8 0.1 2.55 0Z" fill="#7ac6e8"/><circle cx="1.75" cy="3.3" r="0.6" fill="#d4eef9"/></g><rect x="456.8" y="283.90" width="8.2" height="8.2" rx="1.3" fill="#fff" stroke="#a9a9a9" stroke-width="1"/><g transform="translate(438.9 300.35)"><path d="M2.55 0 C3.3 0.1 3.6 0.9 4.1 1.2 C4.7 1.5 5.1 1.7 5.3 2.2 H10 Q10.4 2.2 10.4 2.7 V5.1 H9.2 V3.9 H8.5 V5.1 H7.2 V3.9 H5.4 L5.3 4.4 C5.1 4.9 4.7 5.1 4.1 5.4 C3.6 5.7 3.3 6.5 2.55 6.6 C1.8 6.5 1.5 5.7 1 5.4 C0.3 5 0 4.2 0 3.3 C0 2.4 0.3 1.6 1 1.2 C1.5 0.9 1.8 0.1 2.55 0Z" fill="#7ac6e8"/><circle cx="1.75" cy="3.3" r="0.6" fill="#d4eef9"/></g><rect x="456.8" y="299.70" width="8.2" height="8.2" rx="1.3" fill="#fff" stroke="#a9a9a9" stroke-width="1"/><g transform="translate(438.9 322.45)"><path d="M2.55 0 C3.3 0.1 3.6 0.9 4.1 1.2 C4.7 1.5 5.1 1.7 5.3 2.2 H10 Q10.4 2.2 10.4 2.7 V5.1 H9.2 V3.9 H8.5 V5.1 H7.2 V3.9 H5.4 L5.3 4.4 C5.1 4.9 4.7 5.1 4.1 5.4 C3.6 5.7 3.3 6.5 2.55 6.6 C1.8 6.5 1.5 5.7 1 5.4 C0.3 5 0 4.2 0 3.3 C0 2.4 0.3 1.6 1 1.2 C1.5 0.9 1.8 0.1 2.55 0Z" fill="#7ac6e8"/><circle cx="1.75" cy="3.3" r="0.6" fill="#d4eef9"/></g><rect x="456.8" y="321.80" width="8.2" height="8.2" rx="1.3" fill="#fff" stroke="#a9a9a9" stroke-width="1"/><g transform="translate(438.9 344.25)"><path d="M2.55 0 C3.3 0.1 3.6 0.9 4.1 1.2 C4.7 1.5 5.1 1.7 5.3 2.2 H10 Q10.4 2.2 10.4 2.7 V5.1 H9.2 V3.9 H8.5 V5.1 H7.2 V3.9 H5.4 L5.3 4.4 C5.1 4.9 4.7 5.1 4.1 5.4 C3.6 5.7 3.3 6.5 2.55 6.6 C1.8 6.5 1.5 5.7 1 5.4 C0.3 5 0 4.2 0 3.3 C0 2.4 0.3 1.6 1 1.2 C1.5 0.9 1.8 0.1 2.55 0Z" fill="#7ac6e8"/><circle cx="1.75" cy="3.3" r="0.6" fill="#d4eef9"/></g><rect x="456.8" y="343.60" width="8.2" height="8.2" rx="1.3" fill="#fff" stroke="#a9a9a9" stroke-width="1"/><g transform="translate(438.9 359.85)"><path d="M2.55 0 C3.3 0.1 3.6 0.9 4.1 1.2 C4.7 1.5 5.1 1.7 5.3 2.2 H10 Q10.4 2.2 10.4 2.7 V5.1 H9.2 V3.9 H8.5 V5.1 H7.2 V3.9 H5.4 L5.3 4.4 C5.1 4.9 4.7 5.1 4.1 5.4 C3.6 5.7 3.3 6.5 2.55 6.6 C1.8 6.5 1.5 5.7 1 5.4 C0.3 5 0 4.2 0 3.3 C0 2.4 0.3 1.6 1 1.2 C1.5 0.9 1.8 0.1 2.55 0Z" fill="#7ac6e8"/><circle cx="1.75" cy="3.3" r="0.6" fill="#d4eef9"/></g><rect x="456.8" y="359.20" width="8.2" height="8.2" rx="1.3" fill="#fff" stroke="#a9a9a9" stroke-width="1"/><g transform="translate(438.9 375.55)"><path d="M2.55 0 C3.3 0.1 3.6 0.9 4.1 1.2 C4.7 1.5 5.1 1.7 5.3 2.2 H10 Q10.4 2.2 10.4 2.7 V5.1 H9.2 V3.9 H8.5 V5.1 H7.2 V3.9 H5.4 L5.3 4.4 C5.1 4.9 4.7 5.1 4.1 5.4 C3.6 5.7 3.3 6.5 2.55 6.6 C1.8 6.5 1.5 5.7 1 5.4 C0.3 5 0 4.2 0 3.3 C0 2.4 0.3 1.6 1 1.2 C1.5 0.9 1.8 0.1 2.55 0Z" fill="#7ac6e8"/><circle cx="1.75" cy="3.3" r="0.6" fill="#d4eef9"/></g><rect x="456.8" y="374.90" width="8.2" height="8.2" rx="1.3" fill="#fff" stroke="#a9a9a9" stroke-width="1"/><g transform="translate(438.9 391.25)"><path d="M2.55 0 C3.3 0.1 3.6 0.9 4.1 1.2 C4.7 1.5 5.1 1.7 5.3 2.2 H10 Q10.4 2.2 10.4 2.7 V5.1 H9.2 V3.9 H8.5 V5.1 H7.2 V3.9 H5.4 L5.3 4.4 C5.1 4.9 4.7 5.1 4.1 5.4 C3.6 5.7 3.3 6.5 2.55 6.6 C1.8 6.5 1.5 5.7 1 5.4 C0.3 5 0 4.2 0 3.3 C0 2.4 0.3 1.6 1 1.2 C1.5 0.9 1.8 0.1 2.55 0Z" fill="#7ac6e8"/><circle cx="1.75" cy="3.3" r="0.6" fill="#d4eef9"/></g><rect x="456.8" y="390.60" width="8.2" height="8.2" rx="1.3" fill="#fff" stroke="#a9a9a9" stroke-width="1"/><g transform="translate(438.9 407.15)"><path d="M2.55 0 C3.3 0.1 3.6 0.9 4.1 1.2 C4.7 1.5 5.1 1.7 5.3 2.2 H10 Q10.4 2.2 10.4 2.7 V5.1 H9.2 V3.9 H8.5 V5.1 H7.2 V3.9 H5.4 L5.3 4.4 C5.1 4.9 4.7 5.1 4.1 5.4 C3.6 5.7 3.3 6.5 2.55 6.6 C1.8 6.5 1.5 5.7 1 5.4 C0.3 5 0 4.2 0 3.3 C0 2.4 0.3 1.6 1 1.2 C1.5 0.9 1.8 0.1 2.55 0Z" fill="#7ac6e8"/><circle cx="1.75" cy="3.3" r="0.6" fill="#d4eef9"/></g><rect x="456.8" y="406.50" width="8.2" height="8.2" rx="1.3" fill="#fff" stroke="#a9a9a9" stroke-width="1"/><g transform="translate(438.9 423.15)"><path d="M2.55 0 C3.3 0.1 3.6 0.9 4.1 1.2 C4.7 1.5 5.1 1.7 5.3 2.2 H10 Q10.4 2.2 10.4 2.7 V5.1 H9.2 V3.9 H8.5 V5.1 H7.2 V3.9 H5.4 L5.3 4.4 C5.1 4.9 4.7 5.1 4.1 5.4 C3.6 5.7 3.3 6.5 2.55 6.6 C1.8 6.5 1.5 5.7 1 5.4 C0.3 5 0 4.2 0 3.3 C0 2.4 0.3 1.6 1 1.2 C1.5 0.9 1.8 0.1 2.55 0Z" fill="#7ac6e8"/><circle cx="1.75" cy="3.3" r="0.6" fill="#d4eef9"/></g><rect x="456.8" y="422.50" width="8.2" height="8.2" rx="1.3" fill="#fff" stroke="#a9a9a9" stroke-width="1"/><g transform="translate(438.9 444.95)"><path d="M2.55 0 C3.3 0.1 3.6 0.9 4.1 1.2 C4.7 1.5 5.1 1.7 5.3 2.2 H10 Q10.4 2.2 10.4 2.7 V5.1 H9.2 V3.9 H8.5 V5.1 H7.2 V3.9 H5.4 L5.3 4.4 C5.1 4.9 4.7 5.1 4.1 5.4 C3.6 5.7 3.3 6.5 2.55 6.6 C1.8 6.5 1.5 5.7 1 5.4 C0.3 5 0 4.2 0 3.3 C0 2.4 0.3 1.6 1 1.2 C1.5 0.9 1.8 0.1 2.55 0Z" fill="#7ac6e8"/><circle cx="1.75" cy="3.3" r="0.6" fill="#d4eef9"/></g><rect x="456.8" y="444.30" width="8.2" height="8.2" rx="1.3" fill="#fff" stroke="#a9a9a9" stroke-width="1"/><g transform="translate(438.9 460.65)"><path d="M2.55 0 C3.3 0.1 3.6 0.9 4.1 1.2 C4.7 1.5 5.1 1.7 5.3 2.2 H10 Q10.4 2.2 10.4 2.7 V5.1 H9.2 V3.9 H8.5 V5.1 H7.2 V3.9 H5.4 L5.3 4.4 C5.1 4.9 4.7 5.1 4.1 5.4 C3.6 5.7 3.3 6.5 2.55 6.6 C1.8 6.5 1.5 5.7 1 5.4 C0.3 5 0 4.2 0 3.3 C0 2.4 0.3 1.6 1 1.2 C1.5 0.9 1.8 0.1 2.55 0Z" fill="#7ac6e8"/><circle cx="1.75" cy="3.3" r="0.6" fill="#d4eef9"/></g><rect x="456.8" y="460.00" width="8.2" height="8.2" rx="1.3" fill="#fff" stroke="#a9a9a9" stroke-width="1"/><g transform="translate(438.9 482.85)"><path d="M2.55 0 C3.3 0.1 3.6 0.9 4.1 1.2 C4.7 1.5 5.1 1.7 5.3 2.2 H10 Q10.4 2.2 10.4 2.7 V5.1 H9.2 V3.9 H8.5 V5.1 H7.2 V3.9 H5.4 L5.3 4.4 C5.1 4.9 4.7 5.1 4.1 5.4 C3.6 5.7 3.3 6.5 2.55 6.6 C1.8 6.5 1.5 5.7 1 5.4 C0.3 5 0 4.2 0 3.3 C0 2.4 0.3 1.6 1 1.2 C1.5 0.9 1.8 0.1 2.55 0Z" fill="#7ac6e8"/><circle cx="1.75" cy="3.3" r="0.6" fill="#d4eef9"/></g><rect x="456.8" y="482.20" width="8.2" height="8.2" rx="1.3" fill="#fff" stroke="#a9a9a9" stroke-width="1"/><g transform="translate(438.9 513.75)"><path d="M2.55 0 C3.3 0.1 3.6 0.9 4.1 1.2 C4.7 1.5 5.1 1.7 5.3 2.2 H10 Q10.4 2.2 10.4 2.7 V5.1 H9.2 V3.9 H8.5 V5.1 H7.2 V3.9 H5.4 L5.3 4.4 C5.1 4.9 4.7 5.1 4.1 5.4 C3.6 5.7 3.3 6.5 2.55 6.6 C1.8 6.5 1.5 5.7 1 5.4 C0.3 5 0 4.2 0 3.3 C0 2.4 0.3 1.6 1 1.2 C1.5 0.9 1.8 0.1 2.55 0Z" fill="#7ac6e8"/><circle cx="1.75" cy="3.3" r="0.6" fill="#d4eef9"/></g><rect x="456.8" y="513.10" width="8.2" height="8.2" rx="1.3" fill="#fff" stroke="#a9a9a9" stroke-width="1"/><g transform="translate(438.9 529.35)"><path d="M2.55 0 C3.3 0.1 3.6 0.9 4.1 1.2 C4.7 1.5 5.1 1.7 5.3 2.2 H10 Q10.4 2.2 10.4 2.7 V5.1 H9.2 V3.9 H8.5 V5.1 H7.2 V3.9 H5.4 L5.3 4.4 C5.1 4.9 4.7 5.1 4.1 5.4 C3.6 5.7 3.3 6.5 2.55 6.6 C1.8 6.5 1.5 5.7 1 5.4 C0.3 5 0 4.2 0 3.3 C0 2.4 0.3 1.6 1 1.2 C1.5 0.9 1.8 0.1 2.55 0Z" fill="#7ac6e8"/><circle cx="1.75" cy="3.3" r="0.6" fill="#d4eef9"/></g><rect x="456.8" y="528.70" width="8.2" height="8.2" rx="1.3" fill="#fff" stroke="#a9a9a9" stroke-width="1"/><g transform="translate(438.9 551.25)"><path d="M2.55 0 C3.3 0.1 3.6 0.9 4.1 1.2 C4.7 1.5 5.1 1.7 5.3 2.2 H10 Q10.4 2.2 10.4 2.7 V5.1 H9.2 V3.9 H8.5 V5.1 H7.2 V3.9 H5.4 L5.3 4.4 C5.1 4.9 4.7 5.1 4.1 5.4 C3.6 5.7 3.3 6.5 2.55 6.6 C1.8 6.5 1.5 5.7 1 5.4 C0.3 5 0 4.2 0 3.3 C0 2.4 0.3 1.6 1 1.2 C1.5 0.9 1.8 0.1 2.55 0Z" fill="#7ac6e8"/><circle cx="1.75" cy="3.3" r="0.6" fill="#d4eef9"/></g><rect x="456.8" y="550.60" width="8.2" height="8.2" rx="1.3" fill="#fff" stroke="#a9a9a9" stroke-width="1"/><g transform="translate(438.9 566.95)"><path d="M2.55 0 C3.3 0.1 3.6 0.9 4.1 1.2 C4.7 1.5 5.1 1.7 5.3 2.2 H10 Q10.4 2.2 10.4 2.7 V5.1 H9.2 V3.9 H8.5 V5.1 H7.2 V3.9 H5.4 L5.3 4.4 C5.1 4.9 4.7 5.1 4.1 5.4 C3.6 5.7 3.3 6.5 2.55 6.6 C1.8 6.5 1.5 5.7 1 5.4 C0.3 5 0 4.2 0 3.3 C0 2.4 0.3 1.6 1 1.2 C1.5 0.9 1.8 0.1 2.55 0Z" fill="#7ac6e8"/><circle cx="1.75" cy="3.3" r="0.6" fill="#d4eef9"/></g><rect x="456.8" y="566.30" width="8.2" height="8.2" rx="1.3" fill="#fff" stroke="#a9a9a9" stroke-width="1"/><g transform="translate(438.9 588.85)"><path d="M2.55 0 C3.3 0.1 3.6 0.9 4.1 1.2 C4.7 1.5 5.1 1.7 5.3 2.2 H10 Q10.4 2.2 10.4 2.7 V5.1 H9.2 V3.9 H8.5 V5.1 H7.2 V3.9 H5.4 L5.3 4.4 C5.1 4.9 4.7 5.1 4.1 5.4 C3.6 5.7 3.3 6.5 2.55 6.6 C1.8 6.5 1.5 5.7 1 5.4 C0.3 5 0 4.2 0 3.3 C0 2.4 0.3 1.6 1 1.2 C1.5 0.9 1.8 0.1 2.55 0Z" fill="#7ac6e8"/><circle cx="1.75" cy="3.3" r="0.6" fill="#d4eef9"/></g><rect x="456.8" y="588.20" width="8.2" height="8.2" rx="1.3" fill="#fff" stroke="#a9a9a9" stroke-width="1"/><g transform="translate(438.9 610.65)"><path d="M2.55 0 C3.3 0.1 3.6 0.9 4.1 1.2 C4.7 1.5 5.1 1.7 5.3 2.2 H10 Q10.4 2.2 10.4 2.7 V5.1 H9.2 V3.9 H8.5 V5.1 H7.2 V3.9 H5.4 L5.3 4.4 C5.1 4.9 4.7 5.1 4.1 5.4 C3.6 5.7 3.3 6.5 2.55 6.6 C1.8 6.5 1.5 5.7 1 5.4 C0.3 5 0 4.2 0 3.3 C0 2.4 0.3 1.6 1 1.2 C1.5 0.9 1.8 0.1 2.55 0Z" fill="#7ac6e8"/><circle cx="1.75" cy="3.3" r="0.6" fill="#d4eef9"/></g><rect x="456.8" y="610.00" width="8.2" height="8.2" rx="1.3" fill="#fff" stroke="#a9a9a9" stroke-width="1"/></svg>
<div class="b" style="left:309.80px;top:273.50px;width:500.20px;height:1.00px;background:#d8d8d8;"></div>
<div class="b" style="left:309.80px;top:295.10px;width:500.20px;height:1.00px;background:#d8d8d8;"></div>
<div class="b" style="left:309.80px;top:310.90px;width:500.20px;height:1.00px;background:#d8d8d8;"></div>
<div class="b" style="left:309.80px;top:333.00px;width:500.20px;height:1.00px;background:#d8d8d8;"></div>
<div class="b" style="left:309.80px;top:354.80px;width:500.20px;height:1.00px;background:#d8d8d8;"></div>
<div class="b" style="left:309.80px;top:370.40px;width:500.20px;height:1.00px;background:#d8d8d8;"></div>
<div class="b" style="left:309.80px;top:386.10px;width:500.20px;height:1.00px;background:#d8d8d8;"></div>
<div class="b" style="left:309.80px;top:401.80px;width:500.20px;height:1.00px;background:#d8d8d8;"></div>
<div class="b" style="left:309.80px;top:417.70px;width:500.20px;height:1.00px;background:#d8d8d8;"></div>
<div class="b" style="left:309.80px;top:433.70px;width:500.20px;height:1.00px;background:#d8d8d8;"></div>
<div class="b" style="left:309.80px;top:455.50px;width:500.20px;height:1.00px;background:#d8d8d8;"></div>
<div class="b" style="left:309.80px;top:471.20px;width:500.20px;height:1.00px;background:#d8d8d8;"></div>
<div class="b" style="left:309.80px;top:493.40px;width:500.20px;height:1.00px;background:#d8d8d8;"></div>
<div class="b" style="left:309.80px;top:524.30px;width:500.20px;height:1.00px;background:#d8d8d8;"></div>
<div class="b" style="left:309.80px;top:539.90px;width:500.20px;height:1.00px;background:#d8d8d8;"></div>
<div class="b" style="left:309.80px;top:561.80px;width:500.20px;height:1.00px;background:#d8d8d8;"></div>
<div class="b" style="left:309.80px;top:577.50px;width:500.20px;height:1.00px;background:#d8d8d8;"></div>
<div class="b" style="left:309.80px;top:599.40px;width:500.20px;height:1.00px;background:#d8d8d8;"></div>
<div class="b" style="left:309.80px;top:621.20px;width:500.20px;height:1.00px;background:#d8d8d8;"></div>
<div class="b" style="left:434.90px;top:252.30px;width:1.00px;height:365.70px;background:#d8d8d8;"></div>
<div class="b" style="left:469.70px;top:252.30px;width:1.00px;height:365.70px;background:#d8d8d8;"></div>
<div class="b" style="left:518.55px;top:252.30px;width:1.00px;height:365.70px;background:#d8d8d8;"></div>
<div class="b" style="left:567.40px;top:252.30px;width:1.00px;height:365.70px;background:#d8d8d8;"></div>
<div class="b" style="left:616.25px;top:252.30px;width:1.00px;height:365.70px;background:#d8d8d8;"></div>
<div class="b" style="left:665.10px;top:252.30px;width:1.00px;height:365.70px;background:#d8d8d8;"></div>
<div class="b" style="left:713.95px;top:252.30px;width:1.00px;height:365.70px;background:#d8d8d8;"></div>
<div class="b" style="left:762.80px;top:252.30px;width:1.00px;height:365.70px;background:#d8d8d8;"></div>
<div class="b" style="left:809.00px;top:252.30px;width:1.00px;height:365.70px;background:#d8d8d8;"></div>
<div class="b" style="left:309.80px;top:251.90px;width:500.20px;height:0.90px;background:#d8d8d8;"></div>
<div class="b" style="left:309.80px;top:251.80px;width:160.40px;height:1.00px;background:#4a76b8;"></div>
<div class="b" style="left:345.50px;top:199.00px;width:94.00px;height:113.20px;background:#fff;border:1px solid #8a8a8a;border-top-color:#6a6a6a;box-sizing:border-box;box-shadow:0 1.5px 4px rgba(0,0,0,.38);"></div>
<div class="t " style="left:348.90px;top:200.00px;font:normal normal 8.00px/10.40px 'Liberation Sans',sans-serif;color:#111;letter-spacing:-0.340px;">U.S.</div>
<div class="t " style="left:348.90px;top:210.14px;font:normal normal 8.00px/10.40px 'Liberation Sans',sans-serif;color:#111;letter-spacing:-0.217px;">PADD 1</div>
<div class="t " style="left:355.50px;top:220.28px;font:normal normal 8.00px/10.40px 'Liberation Sans',sans-serif;color:#111;letter-spacing:-0.216px;">New England</div>
<div class="t " style="left:355.50px;top:230.42px;font:normal normal 8.00px/10.40px 'Liberation Sans',sans-serif;color:#111;letter-spacing:-0.057px;">Central Atlantic</div>
<div class="t " style="left:355.50px;top:240.56px;font:normal normal 8.00px/10.40px 'Liberation Sans',sans-serif;color:#111;letter-spacing:-0.178px;">Lower Atlantic</div>
<div class="t " style="left:348.90px;top:250.70px;font:normal normal 8.00px/10.40px 'Liberation Sans',sans-serif;color:#111;letter-spacing:-0.217px;">PADD 2</div>
<div class="b" style="left:346.30px;top:260.60px;width:92.40px;height:10.10px;background:#1e8fff;"></div>
<div class="t " style="left:362.40px;top:260.84px;font:normal normal 8.00px/10.40px 'Liberation Sans',sans-serif;color:#fff;letter-spacing:-0.098px;">Cushing, Oklahoma</div>
<div class="t " style="left:348.90px;top:270.98px;font:normal normal 8.00px/10.40px 'Liberation Sans',sans-serif;color:#111;letter-spacing:-0.217px;">PADD 3</div>
<div class="t " style="left:348.90px;top:281.12px;font:normal normal 8.00px/10.40px 'Liberation Sans',sans-serif;color:#111;letter-spacing:-0.217px;">PADD 4</div>
<div class="t " style="left:348.90px;top:291.26px;font:normal normal 8.00px/10.40px 'Liberation Sans',sans-serif;color:#111;letter-spacing:-0.217px;">PADD 5</div>
<div class="t " style="left:348.90px;top:301.40px;font:normal normal 8.00px/10.40px 'Liberation Sans',sans-serif;color:#111;letter-spacing:-0.200px;">PADD&#x27;s 4 &amp; 5</div>
<div class="b" style="left:1256.00px;top:0.00px;width:11.00px;height:618.00px;background:#f1f1f1;"></div>
<div class="b" style="left:1257.20px;top:11.20px;width:8.60px;height:272.80px;background:#c1c1c1;"></div>
<svg style="left:1259.2px;top:4.7px" width="4.8" height="2.8" viewBox="0 0 10 6"><path d="M0 6H10L5 0Z" fill="#666"/></svg>
<svg style="left:1259.2px;top:610.6px" width="4.8" height="2.8" viewBox="0 0 10 6"><path d="M0 0H10L5 6Z" fill="#555"/></svg>
<div class="t" lang="zh-CN" style="left:1076.1px;top:554.2px;font:300 13.2px/18px 'Liberation Sans','Noto Sans CJK SC',sans-serif;color:#c4c4c4;">激活 <span style="font-size:14px;letter-spacing:0.02px">Windows</span></div>
<div class="t" lang="zh-CN" style="left:1076.1px;top:573.8px;font:300 9.5px/14px 'Liberation Sans','Noto Sans CJK SC',sans-serif;color:#d0d0d0;letter-spacing:0.42px">转到<span style="font-family:'Liberation Sans',sans-serif">“</span>设置<span style="font-family:'Liberation Sans',sans-serif">”</span>以激活 <span style="font-size:10.1px">Windows</span>。</div>
</body></html>
